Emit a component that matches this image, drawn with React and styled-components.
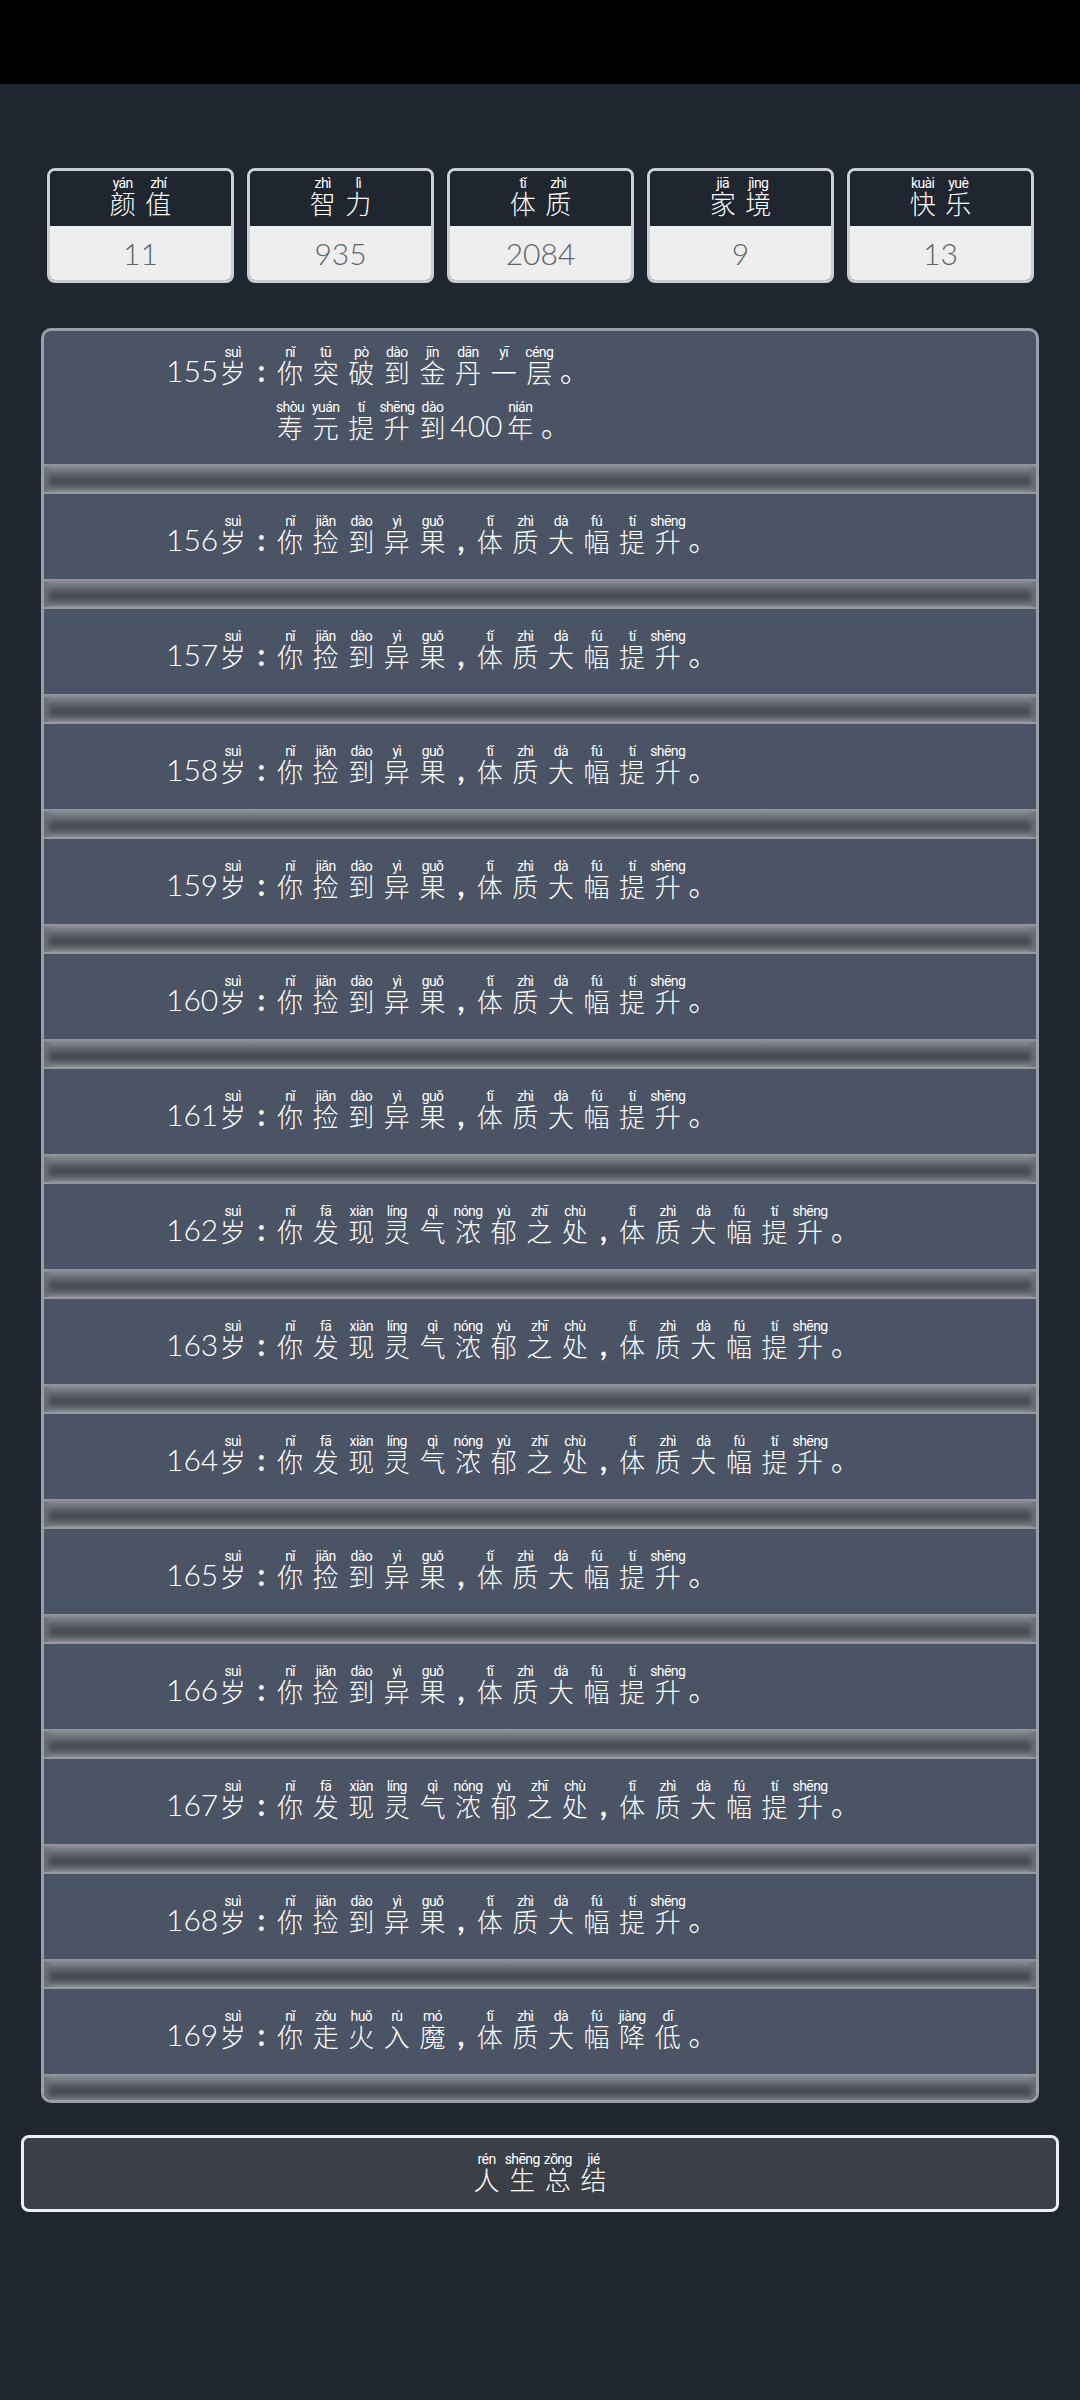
import React from 'react';
import styled, { createGlobalStyle } from 'styled-components';

const GlobalStyle = createGlobalStyle`
  html, body {
    margin: 0;
    padding: 0;
    background: #202630;
  }
  body {
    font-family: "Lato", "Noto Sans CJK SC", sans-serif;
    font-weight: 300;
  }
`;

const Page = styled.div`
  width: 1080px;
  height: 2400px;
  overflow: hidden;
  background: #202630;
`;

const StatusBar = styled.div`
  height: 84px;
  background: #000;
`;

const StatsRow = styled.div`
  display: flex;
  gap: 13px;
  margin: 84px 46px 0 47px;
`;

const StatCard = styled.div`
  width: 187px;
  height: 115px;
  box-sizing: border-box;
  border: 3px solid #c9ccd0;
  border-radius: 8px;
  overflow: hidden;
  display: flex;
  flex-direction: column;
`;

const StatName = styled.div`
  height: 55px;
  display: flex;
  justify-content: center;
  align-items: flex-end;
  padding-bottom: 3px;
  box-sizing: border-box;
  background: #202630;
  color: #fff;
  line-height: 36px;
`;

const StatValue = styled.div`
  flex: 1;
  display: flex;
  justify-content: center;
  align-items: center;
  background: #eeeeee;
  color: #5f646b;
  font-size: 30px;
`;

const LogPanel = styled.div`
  width: 998px;
  height: 1775px;
  box-sizing: border-box;
  margin: 45px 0 0 41px;
  border: 3px solid #9a9ea6;
  border-radius: 10px;
  overflow: hidden;
  background: #4a5464;
`;

const Row = styled.div`
  display: flex;
  box-sizing: border-box;
  padding: ${p => (p.$first ? '2px' : '8px')} 0 0 122px;
  height: ${p => (p.$first ? '133px' : '85px')};
  color: #fff;
  font-size: 30px;
`;

const Age = styled.div`
  display: flex;
  height: 55px;
  align-items: flex-end;
`;

const Lines = styled.div`
  display: flex;
  flex-direction: column;
`;

const Line = styled.div`
  display: flex;
  height: 55px;
  align-items: flex-end;
`;

const Digits = styled.span`
  width: 49px;
  line-height: 36px;
`;

const Cell = styled.span`
  display: block;
  width: ${p => (p.$narrow ? '21.7px' : '35.6px')};
  text-align: center;
  line-height: 36px;
  font-weight: ${p => (p.$narrow ? 700 : 300)};
`;

const Zi = styled.ruby`
  position: relative;
  top: 3px;
  ruby-position: over;
  font-size: 26px;

  rt {
    position: relative;
    top: 0;
    font-family: "Roboto", sans-serif;
    font-size: 14px;
    font-weight: 400;
    line-height: 14px;
    letter-spacing: -0.6px;
    white-space: nowrap;
  }
`;

const Groove = styled.div`
  position: relative;
  height: 30px;
  background: linear-gradient(
    180deg,
    #94979e 0,
    #85888f 3px,
    #72757d 7px,
    #5c5f67 11px,
    #4a4c53 16px,
    #4c4e55 19px,
    #5f6169 23px,
    #7e8188 27px,
    #95989f 28px,
    #95989f 30px
  );

  &::before,
  &::after {
    content: "";
    position: absolute;
    top: 3px;
    bottom: 2px;
    width: 9px;
  }
  &::before {
    left: 0;
    background: linear-gradient(90deg, #6d717b, rgba(109, 113, 123, 0));
  }
  &::after {
    right: 0;
    background: linear-gradient(270deg, #6d717b, rgba(109, 113, 123, 0));
  }
`;

const SummaryButton = styled.button`
  display: flex;
  justify-content: center;
  align-items: flex-end;
  width: 1038px;
  height: 77px;
  box-sizing: border-box;
  margin: 32px 0 0 21px;
  padding: 0 0 14px;
  border: 3px solid #eceef1;
  border-radius: 8px;
  background: #3b3f48;
  color: #fff;
  font-family: inherit;
  font-size: 30px;
  font-weight: 300;
`;

const FOUND_FRUIT = '你|nǐ 捡|jiǎn 到|dào 异|yì 果|guǒ ,';
const FOUND_QI = '你|nǐ 发|fā 现|xiàn 灵|líng 气|qì 浓|nóng 郁|yù 之|zhī 处|chù ,';
const BODY_UP = '体|tǐ 质|zhì 大|dà 幅|fú 提|tí 升|shēng 。';

const LOG = [
  { age: 155, lines: ['你|nǐ 突|tū 破|pò 到|dào 金|jīn 丹|dān 一|yī 层|céng 。', '寿|shòu 元|yuán 提|tí 升|shēng 到|dào #400 年|nián 。'] },
  { age: 156, lines: [`${FOUND_FRUIT} ${BODY_UP}`] },
  { age: 157, lines: [`${FOUND_FRUIT} ${BODY_UP}`] },
  { age: 158, lines: [`${FOUND_FRUIT} ${BODY_UP}`] },
  { age: 159, lines: [`${FOUND_FRUIT} ${BODY_UP}`] },
  { age: 160, lines: [`${FOUND_FRUIT} ${BODY_UP}`] },
  { age: 161, lines: [`${FOUND_FRUIT} ${BODY_UP}`] },
  { age: 162, lines: [`${FOUND_QI} ${BODY_UP}`] },
  { age: 163, lines: [`${FOUND_QI} ${BODY_UP}`] },
  { age: 164, lines: [`${FOUND_QI} ${BODY_UP}`] },
  { age: 165, lines: [`${FOUND_FRUIT} ${BODY_UP}`] },
  { age: 166, lines: [`${FOUND_FRUIT} ${BODY_UP}`] },
  { age: 167, lines: [`${FOUND_QI} ${BODY_UP}`] },
  { age: 168, lines: [`${FOUND_FRUIT} ${BODY_UP}`] },
  { age: 169, lines: ['你|nǐ 走|zǒu 火|huǒ 入|rù 魔|mó , 体|tǐ 质|zhì 大|dà 幅|fú 降|jiàng 低|dī 。'] },
];

const STATS = [
  { name: '颜|yán 值|zhí', value: 11 },
  { name: '智|zhì 力|lì', value: 935 },
  { name: '体|tǐ 质|zhì', value: 2084 },
  { name: '家|jiā 境|jìng', value: 9 },
  { name: '快|kuài 乐|yuè', value: 13 },
];

// tokens: "字|pinyin", "#digits" or bare punctuation
const Tokens = ({ text }) =>
  text.split(' ').map((token, i) => {
    if (token.startsWith('#')) return <span key={i}>{token.slice(1)}</span>;
    const [zi, pinyin] = token.split('|');
    if (!pinyin) return <Cell key={i} $narrow={zi !== '。'}>{zi}</Cell>;
    return (
      <Cell key={i}>
        <Zi>{zi}<rt>{pinyin}</rt></Zi>
      </Cell>
    );
  });

export default function App() {
  return (
    <Page>
      <GlobalStyle />
      <StatusBar />
      <StatsRow>
        {STATS.map(stat => (
          <StatCard key={stat.name}>
            <StatName><Tokens text={stat.name} /></StatName>
            <StatValue>{stat.value}</StatValue>
          </StatCard>
        ))}
      </StatsRow>
      <LogPanel>
        {LOG.map((entry, i) => (
          <React.Fragment key={entry.age}>
            <Row $first={i === 0}>
              <Age>
                <Digits>{entry.age}</Digits>
                <Tokens text="岁|suì :" />
              </Age>
              <Lines>
                {entry.lines.map(line => (
                  <Line key={line}><Tokens text={line} /></Line>
                ))}
              </Lines>
            </Row>
            <Groove />
          </React.Fragment>
        ))}
      </LogPanel>
      <SummaryButton><Tokens text="人|rén 生|shēng 总|zǒng 结|jié" /></SummaryButton>
    </Page>
  );
}
